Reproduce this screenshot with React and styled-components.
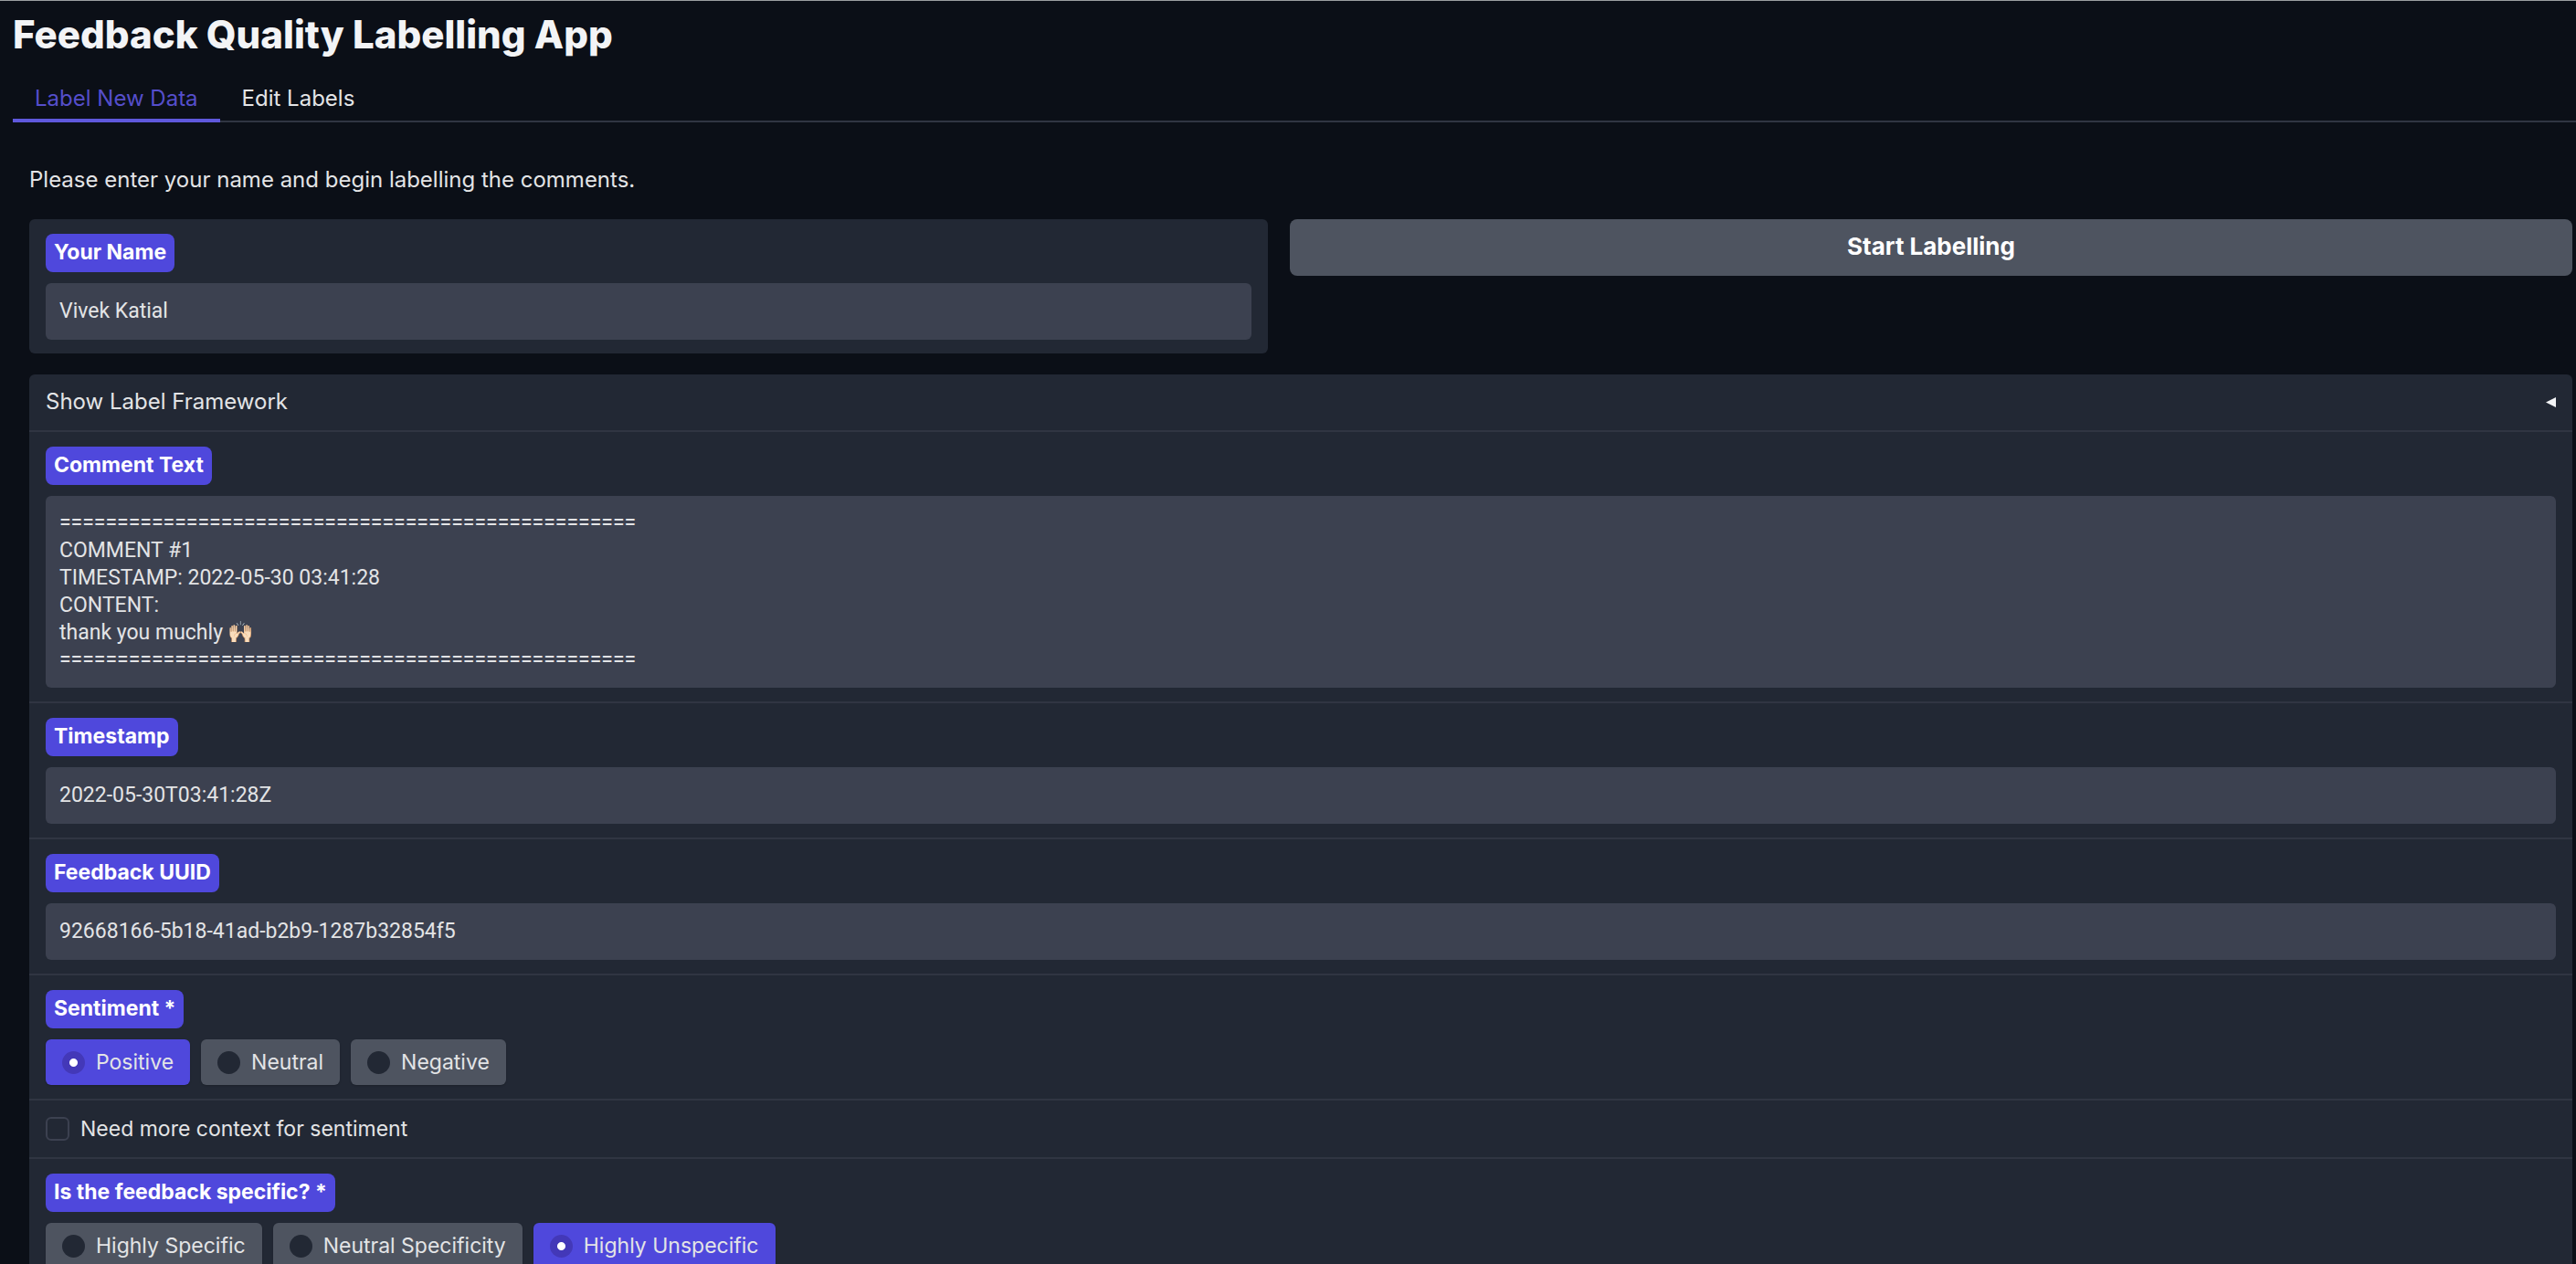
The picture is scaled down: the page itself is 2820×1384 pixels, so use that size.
import React, { useState } from "react";
import styled, { createGlobalStyle } from "styled-components";

const colors = {
    page: "#0b0f17",
    block: "#222834",
    field: "#3c4150",
    line: "#303542",
    chip: "#4e5460",
    indigo: "#4f48dc",
    indigoDark: "#4338b8",
    text: "#e3e4e6",
}

const GlobalStyle = createGlobalStyle`
    * {
        box-sizing: border-box;
    }
    body {
        margin: 0;
        background-color: ${colors.page};
        color: ${colors.text};
        font-family: Inter, sans-serif;
        font-size: 23px;
        line-height: 32px;
    }
`

const Page = styled.div`
    height: 100vh;
    padding: 12px 0 0 14px;
    border-top: 1px solid #9b9fa1;
    overflow-y: auto;
    scrollbar-width: none;
`

const Title = styled.h1`
    margin: 0 0 19px;
    font-size: 42px;
    font-weight: 800;
    line-height: 50px;
    color: #f3f4f6;
`

const Tabs = styled.div`
    display: flex;
    box-shadow: inset 0 -2px 0 ${colors.line};
`

const Tab = styled.button`
    padding: 10px 24px 6px;
    border: 0;
    border-bottom: 4px solid ${props => props.$active ? "#5f58dc" : "transparent"};
    background: none;
    font: inherit;
    font-size: 24px;
    color: ${props => props.$active ? "#554ecb" : colors.text};
`

const TabPanel = styled.main`
    padding: 47px 4px 0 18px;
`

const Intro = styled.p`
    margin: 0 0 27px;
    font-size: 24px;
`

const NameRow = styled.div`
    display: grid;
    grid-template-columns: calc(50% - 36px) 1fr;
    gap: 24px;
    align-items: start;
    margin-bottom: 23px;
`

const Card = styled.section`
    border-radius: 6px;
    background-color: ${colors.block};
`

const Block = styled.div`
    padding: 16px 18px 15px;
    & + & {
        border-top: 2px solid ${colors.line};
    }
`

const badge = `
    display: block;
    width: fit-content;
    margin-bottom: 12px;
    padding: 4px 9px 6px;
    border-radius: 8px;
    background-color: ${colors.indigo};
    font-weight: 700;
    color: #fff;
`

const Badge = styled.label`${badge}`

const GroupBadge = styled.span`${badge}`

const fieldStyles = `
    display: block;
    width: 100%;
    border: 0;
    border-radius: 6px;
    background-color: ${colors.field};
    color: ${colors.text};
    font-family: Roboto, "Noto Color Emoji", sans-serif;
    font-size: 23px;
    line-height: 30px;
`

const TextInput = styled.input`
    ${fieldStyles}
    padding: 16px 15px;
`

const TextArea = styled.textarea`
    ${fieldStyles}
    padding: 15px;
    resize: none;
`

const StartButton = styled.button`
    padding: 14px 24px 16px;
    border: 0;
    border-radius: 8px;
    background-color: ${colors.chip};
    font: inherit;
    font-size: 26px;
    font-weight: 700;
    color: #fff;
`

const Accordion = styled.button`
    display: flex;
    align-items: center;
    justify-content: space-between;
    width: 100%;
    padding: 14px 18px 15px;
    border: 0;
    border-bottom: 2px solid ${colors.line};
    background: none;
    font: inherit;
    font-size: 24px;
    color: ${colors.text};
`

const Options = styled.div`
    display: flex;
    flex-wrap: wrap;
    gap: 12px;
`

const Option = styled.label`
    display: flex;
    align-items: center;
    gap: 12px;
    padding: 9px 18px;
    border-radius: 6px;
    background-color: ${props => props.$checked ? colors.indigo : colors.chip};
    box-shadow: 0 1px 2px rgba(0, 0, 0, 0.2);
`

const Radio = styled.input.attrs({ type: "radio" })`
    appearance: none;
    width: 25px;
    height: 25px;
    margin: 0;
    border-radius: 50%;
    background: ${colors.block};
    &:checked {
        background: radial-gradient(circle, #fff 4px, ${colors.indigoDark} 5px);
    }
`

const CheckRow = styled(Block)`
    padding: 15px 18px;
    label {
        display: flex;
        align-items: center;
        gap: 12px;
        width: fit-content;
    }
`

const Checkbox = styled.input.attrs({ type: "checkbox" })`
    appearance: none;
    width: 26px;
    height: 26px;
    margin: 0;
    border: 2px solid ${colors.field};
    border-radius: 6px;
    &:checked {
        background-color: ${colors.indigo};
    }
`

const rule = "=".repeat(50);
const comment = [
  rule,
  "COMMENT #1",
  "TIMESTAMP: 2022-05-30 03:41:28",
  "CONTENT:",
  "thank you muchly 🙌🏻",
  rule,
].join("\n");

const RadioGroup = ({ name, label, options, initial }) => {
  const [value, setValue] = useState(initial);
  return (
    <Block role="radiogroup" aria-labelledby={`${name}-label`}>
      <GroupBadge id={`${name}-label`}>{label}</GroupBadge>
      <Options>
        {options.map(option => (
          <Option key={option} $checked={option === value}>
            <Radio name={name} checked={option === value} onChange={() => setValue(option)} />
            {option}
          </Option>
        ))}
      </Options>
    </Block>
  )
}

const App = () => {
  const [tab, setTab] = useState("Label New Data");
  return (
    <Page>
      <GlobalStyle />
      <Title>Feedback Quality Labelling App</Title>
      <Tabs role="tablist">
        {["Label New Data", "Edit Labels"].map(name => (
          <Tab key={name} role="tab" aria-selected={tab === name} $active={tab === name} onClick={() => setTab(name)}>
            {name}
          </Tab>
        ))}
      </Tabs>
      <TabPanel>
        <Intro>Please enter your name and begin labelling the comments.</Intro>
        <NameRow>
          <Card>
            <Block>
              <Badge htmlFor="name">Your Name</Badge>
              <TextInput id="name" defaultValue="Vivek Katial" />
            </Block>
          </Card>
          <StartButton>Start Labelling</StartButton>
        </NameRow>
        <Card>
          <Accordion aria-expanded="false">
            Show Label Framework
            <svg width="11" height="11" viewBox="0 0 12 12" aria-hidden="true">
              <path d="M0 6 12 0v12z" fill="#f3f4f6" />
            </svg>
          </Accordion>
          <Block>
            <Badge htmlFor="comment">Comment Text</Badge>
            <TextArea id="comment" rows={6} readOnly value={comment} />
          </Block>
          <Block>
            <Badge htmlFor="timestamp">Timestamp</Badge>
            <TextInput id="timestamp" readOnly value="2022-05-30T03:41:28Z" />
          </Block>
          <Block>
            <Badge htmlFor="uuid">Feedback UUID</Badge>
            <TextInput id="uuid" readOnly value="92668166-5b18-41ad-b2b9-1287b32854f5" />
          </Block>
          <RadioGroup
            name="sentiment"
            label="Sentiment *"
            options={["Positive", "Neutral", "Negative"]}
            initial="Positive"
          />
          <CheckRow>
            <label>
              <Checkbox />
              Need more context for sentiment
            </label>
          </CheckRow>
          <RadioGroup
            name="specificity"
            label="Is the feedback specific? *"
            options={["Highly Specific", "Neutral Specificity", "Highly Unspecific"]}
            initial="Highly Unspecific"
          />
        </Card>
      </TabPanel>
    </Page>
  )
}

export default App
